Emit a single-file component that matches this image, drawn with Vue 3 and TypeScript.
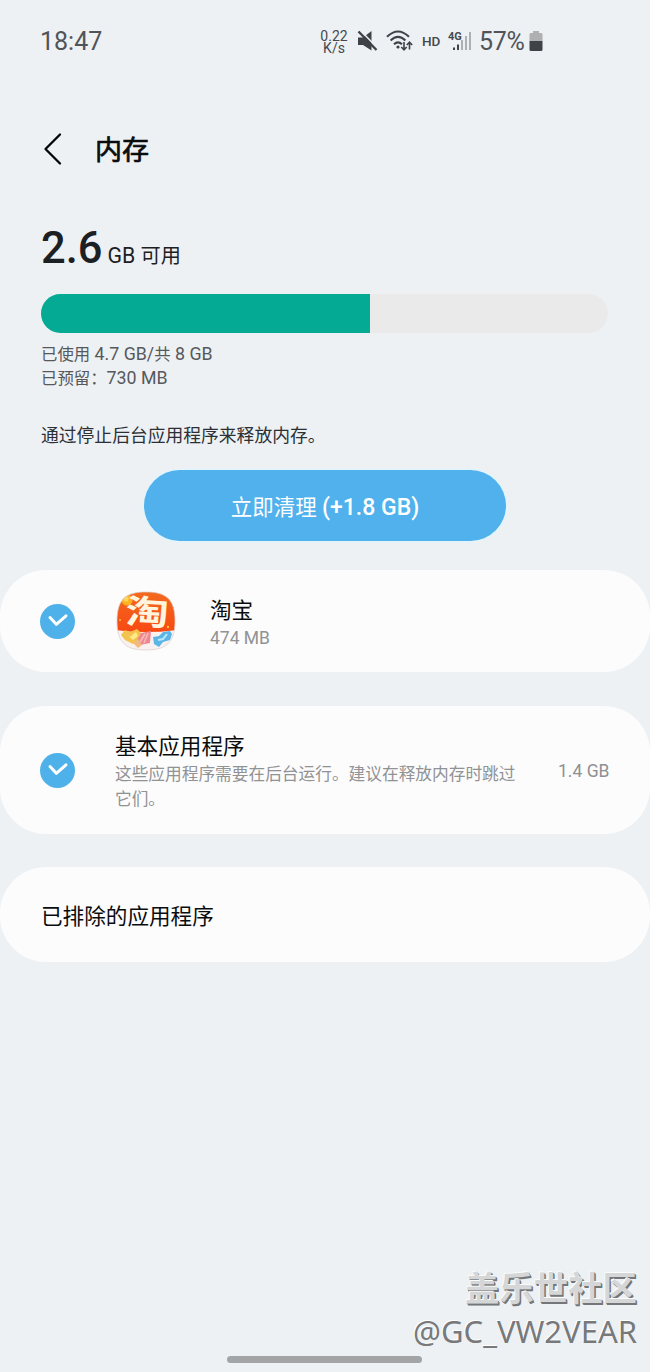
<script setup lang="ts">
import { ref } from 'vue'

const usedPercent = 58.1
const taobaoChecked = ref<boolean>(true)
const basicChecked = ref<boolean>(true)
</script>

<template>
  <div class="screen">
    <header class="status">
      <span class="clock">18:47</span>
      <div class="speed"><span>0.22</span><span>K/s</span></div>
      <svg class="ic mute" width="22" height="24" viewBox="0 0 22 24">
        <path d="M1 8.500H6L14.500 2V21.500L6 16H1Z" fill="#3f4347" />
        <path d="M2.500 0.500L21.500 20" stroke="#edf1f4" stroke-width="1.600" />
        <path d="M1.500 2.500L19.500 21" stroke="#3f4347" stroke-width="2.400" />
      </svg>
      <svg class="ic wifi" width="28" height="24" viewBox="0 0 28 24">
        <g fill="none" stroke="#3f4347" stroke-width="2.100">
          <path d="M1 7.800Q12 -2.800 23 7.800" />
          <path d="M4.600 11.600Q12 4.300 19.400 11.600" />
          <path d="M8 15.200Q12 11.400 16 15.200" />
        </g>
        <circle cx="12" cy="18" r="1.600" fill="#3f4347" />
        <g fill="none" stroke="#3f4347" stroke-width="1.600">
          <path d="M18 13V20.500M15.300 18L18 20.800L20.700 18" />
          <path d="M23.500 20.500V13.500M20.800 16L23.500 13.200L26.200 16" />
        </g>
      </svg>
      <span class="hd">HD</span>
      <svg class="ic signal" width="24" height="24" viewBox="0 0 24 24">
        <text x="0" y="10.500" class="net">4G</text>
        <rect x="5" y="18.500" width="2" height="2.500" fill="#3f4347" />
        <rect x="9" y="15.500" width="2" height="5.500" fill="#3f4347" />
        <rect x="13" y="11" width="2" height="10" fill="#aeb1b4" />
        <rect x="17" y="7" width="2" height="14" fill="#aeb1b4" />
        <rect x="21" y="3" width="2" height="18" fill="#aeb1b4" />
      </svg>
      <span class="percent">57%</span>
      <svg class="ic battery" width="14" height="22" viewBox="0 0 14 22">
        <path d="M4 1H10V3H12Q13.500 3 13.500 4.500V11H.5V4.500Q.5 3 2 3H4Z" fill="#aeb0b2" />
        <path d="M.5 11H13.500V19.500Q13.500 21 12 21H2Q.5 21 .5 19.500Z" fill="#3f4347" />
      </svg>
    </header>

    <nav class="titlebar">
      <svg width="20" height="34" viewBox="0 0 20 34">
        <path d="M17 2.500L2.500 17L17 31.500" fill="none" stroke="#050505" stroke-width="2.300" stroke-linecap="round" stroke-linejoin="round" />
      </svg>
      <h1>内存</h1>
    </nav>

    <section class="summary">
      <div class="free"><strong>2.6</strong><span>GB <i>可用</i></span></div>
      <div class="meter"><div class="fill" :style="{ width: usedPercent + '%' }"></div></div>
      <p class="usage"><i>已使用</i> 4.7 GB/<i>共</i> 8 GB<br /><i>已预留：</i>730 MB</p>
      <p class="hint">通过停止后台应用程序来释放内存。</p>
      <button class="clean" type="button">立即清理 <b>(+1.8 GB)</b></button>
    </section>

    <section class="card app">
      <button class="check" type="button" @click="taobaoChecked = !taobaoChecked">
        <svg width="20" height="14" viewBox="0 0 20 14">
          <path v-if="taobaoChecked" d="M2 3.500L8.300 10.300L18 1.800" />
        </svg>
      </button>
      <svg class="logo" width="60" height="60" viewBox="0 0 60 60">
        <defs>
          <clipPath id="tile">
            <path d="M30 1C50 1 59 8 59 30S50 59 30 59S1 52 1 30S10 1 30 1Z" />
          </clipPath>
          <linearGradient id="orange" x1="0" y1="0" x2="0" y2="1">
            <stop offset="0" stop-color="#f36b20" />
            <stop offset="1" stop-color="#f84913" />
          </linearGradient>
        </defs>
        <g clip-path="url(#tile)">
          <rect width="60" height="60" fill="#f8f1ef" />
          <path d="M0 0H60V39Q30 43 0 39Z" fill="url(#orange)" />
          <circle cx="11" cy="9" r="5.500" fill="#ffb321" />
          <circle cx="10" cy="8" r="2.500" fill="#ffd65b" />
          <circle cx="4" cy="29" r="1" fill="#ffc43a" />
          <circle cx="52" cy="36" r="1.200" fill="#ffc43a" />
          <path d="M5 44L9 39L14 41L21 38L25 42L24 49L17 53L9 49Z" fill="#f3c34e" />
          <path d="M10 43L14 46L20 41L22 45L17 49Z" fill="#ffe98b" />
          <path d="M25 42L35 40L34 52L24 54L21 49Z" fill="#ee8791" />
          <path d="M24 51L29 43M28 52L32 42" stroke="#f9bcb8" stroke-width="1.500" />
          <path d="M37 46L43 45L47 41L54 40L56 43L54 49L47 51L43 56L38 53Z" fill="#5bb6e8" />
          <path d="M42 49L47 48L51 43" fill="none" stroke="#bde8fc" stroke-width="2" />
          <path d="M17 52L22 48L26 54L22 57Z" fill="#f2ba7c" />
        </g>
        <text x="0" y="0" text-anchor="middle" class="mark" transform="translate(30.500 33.500) rotate(3) scale(1.200 .94)">淘</text>
        <path d="M30 1C50 1 59 8 59 30S50 59 30 59S1 52 1 30S10 1 30 1Z" fill="none" stroke="#d9cfcc" stroke-width=".7" />
      </svg>
      <div class="info">
        <h2>淘宝</h2>
        <p>474 MB</p>
      </div>
    </section>

    <section class="card basic">
      <button class="check" type="button" @click="basicChecked = !basicChecked">
        <svg width="20" height="14" viewBox="0 0 20 14">
          <path v-if="basicChecked" d="M2 3.500L8.300 10.300L18 1.800" />
        </svg>
      </button>
      <div class="info">
        <h2>基本应用程序</h2>
        <p>这些应用程序需要在后台运行。建议在释放内存时跳过它们。</p>
      </div>
      <span class="size">1.4 GB</span>
    </section>

    <section class="card excluded"><h2>已排除的应用程序</h2></section>

    <div class="watermark">
      <div class="community">盖乐世社区</div>
      <div class="author">@GC_VW2VEAR</div>
    </div>
    <div class="home"></div>
  </div>
</template>

<style>
body { background: #edf1f4; }
</style>

<style scoped>
* { box-sizing: border-box; margin: 0; }
.screen {
  position: relative;
  width: 650px;
  height: 1372px;
  overflow: hidden;
  background: #edf1f4;
  font-family: Roboto, "Noto Sans CJK SC", sans-serif;
  color: #0b0c0d;
}
button { border: 0; padding: 0; font-family: inherit; }
svg { display: block; flex: none; overflow: visible; }
h1, h2 { font-weight: 400; }
i { font-style: normal; }
.status { display: flex; align-items: center; height: 82px; padding-left: 40px; color: #505458; }
.clock { width: 280px; font-size: 25px; }
.speed { display: flex; flex-direction: column; align-items: center; width: 28px; font-size: 14px; line-height: 12px; color: #45494d; margin-top: 2px; }
.mute { margin-left: 9px; }
.wifi { margin-left: 7px; }
.hd { width: 19px; margin-left: 8px; font-size: 13.5px; font-weight: 500; color: #45494d; }
.signal { margin-left: 7px; }
.net { font-size: 11px; font-weight: 700; fill: #45494d; }
.percent { width: 47px; margin-left: 7px; font-size: 25px; letter-spacing: -0.3px; }
.battery { margin-left: 3px; }

.titlebar { display: flex; align-items: center; height: 134px; padding-left: 43px; }
.titlebar h1 { margin-left: 32px; padding-top: 3px; font-size: 27px; font-weight: 400; line-height: 40px; -webkit-text-stroke: 0.7px #0b0c0d; }
.summary { padding: 0 42px 0 41px; }
.free { display: flex; align-items: baseline; height: 78px; padding-top: 1px; line-height: 64px; color: #1d2023; }
.free strong { font-size: 43.5px; font-weight: 500; }
.free span { margin-left: 5px; font-size: 21.3px; }
.free i { font-size: 20.2px; }
.meter { height: 39px; overflow: hidden; border-radius: 20px; background: #eaeaea; }
.fill { height: 100%; background: #04aa94; }
.usage { margin-top: 9px; font-size: 17.8px; line-height: 24px; color: #56595c; }
.usage i { font-size: 16.4px; line-height: 1; }
.hint { margin-top: 32px; font-size: 17.8px; line-height: 28px; color: #2c3034; }
.clean {
  display: block;
  width: 362px;
  height: 71px;
  margin: 20px 0 0 103px;
  border-radius: 36px;
  background: #50b1ec;
  box-shadow: 0 0 0 1.5px #e2f5fd;
  color: #fff;
  font-size: 21.5px;
}
.clean b { font-size: 23px; font-weight: 500; }

.card { display: flex; width: 650px; border-radius: 46px; background: #fcfcfc; }
.check { display: flex; align-items: center; justify-content: center; flex: none; width: 35px; height: 35px; border-radius: 50%; background: #4fb1e9; }
.check path { fill: none; stroke: #fff; stroke-width: 3; stroke-linecap: round; stroke-linejoin: round; }
.app { height: 102px; margin-top: 29px; padding-left: 40px; align-items: center; }
.logo { margin-left: 41px; }
.mark { font-family: "Noto Sans CJK SC", sans-serif; font-size: 36px; font-weight: 700; fill: #fff5df; }
.info h2, .excluded h2 { font-size: 21.6px; line-height: 30px; }
.info p { color: #909294; }
.app .info { margin-left: 34px; padding-top: 3px; }
.app .info p { font-size: 17.5px; line-height: 24px; }
.basic { height: 128px; margin-top: 34px; padding-left: 40px; align-items: center; }
.basic .info { width: 404px; margin-left: 40px; padding-top: 4px; }
.basic .info p { font-size: 16.7px; line-height: 25px; }
.size { margin-left: 39px; padding-top: 1px; font-size: 17.5px; color: #8e9092; }
.excluded { height: 95px; margin-top: 33px; padding: 4px 0 0 41px; align-items: center; }

.watermark { position: absolute; right: 13px; bottom: 19px; text-align: right; color: #d4d6d7; white-space: nowrap; }
.community {
  font-family: "Noto Sans CJK SC", sans-serif;
  font-size: 34.4px;
  font-weight: 700;
  line-height: 46px;
  margin-bottom: 1px;
  text-shadow: -1px -1px 0 #fafbfb, 1px 1px 0 #747678, 1.500px 1.500px 0 #747678;
}
.author {
  font-family: "Noto Sans", sans-serif;
  font-size: 31px;
  line-height: 43px;
  color: #77797b;
  text-shadow: -1px -1px 0 #fff;
}
.home { position: absolute; left: 227px; bottom: 9px; width: 195px; height: 7px; border-radius: 4px; background: #a2a4a6; }
</style>
